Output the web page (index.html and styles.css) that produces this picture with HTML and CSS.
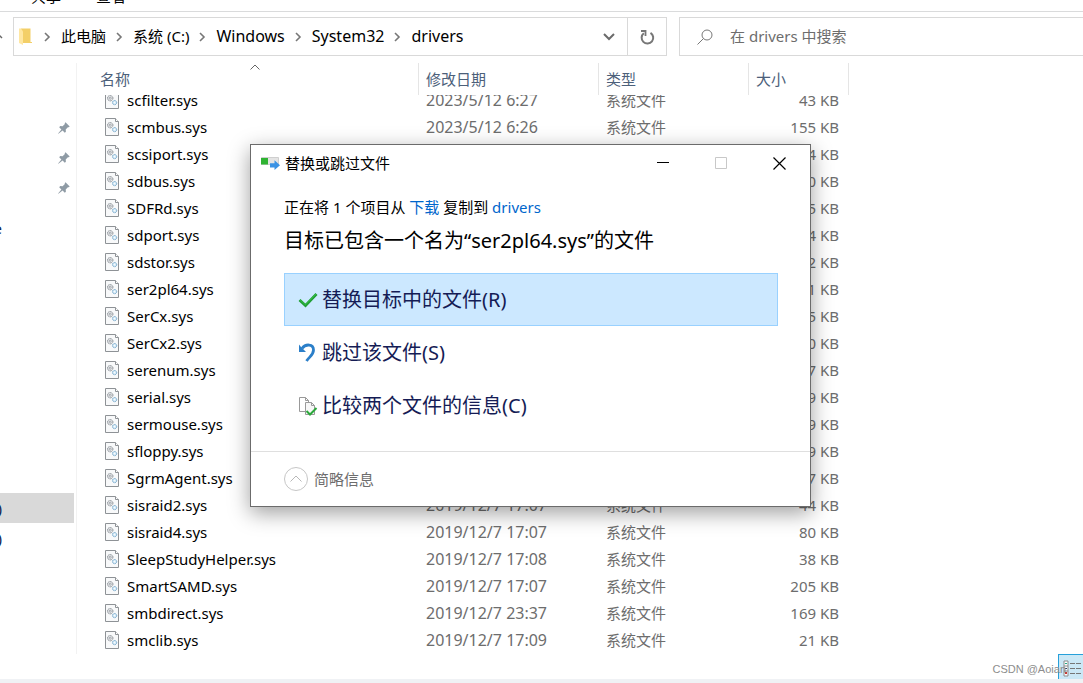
FILE: index.html
```html
<!DOCTYPE html>
<html lang="zh-CN">
<head>
<meta charset="utf-8">
<title>drivers</title>
<link rel="stylesheet" href="styles.css">
</head>
<body>
<svg class="defs" aria-hidden="true">
  <symbol id="sys" viewBox="0 0 14 18">
    <path d="M.5.5h10l3 3v14H.5z" fill="#f8f9fa" stroke="#8e9296"/>
    <path d="M10.500.5v3h3" fill="#fff" stroke="#8e9296"/>
    <circle cx="5.200" cy="7.200" r="2.700" fill="#e4e6e8" stroke="#838a90" stroke-dasharray="1.200 .5"/>
    <circle cx="5.200" cy="7.200" r="1" fill="#fff" stroke="#838a90" stroke-width=".7"/>
    <circle cx="9.600" cy="11.600" r="2.100" fill="#d8ecf8" stroke="#6fa3c8" stroke-dasharray="1.200 .4"/>
    <circle cx="9.600" cy="11.600" r=".6" fill="#fff"/>
  </symbol>
  <symbol id="chev" viewBox="0 0 8 10"><path d="M2 1l4 4-4 4" fill="none" stroke="#777" stroke-width="1.600"/></symbol>
  <symbol id="pin" viewBox="0 0 12 12"><path d="M7.500.3l4.200 4.200-1 .8-.8-.1-2.200 2.300.2 2.300-1.100 1L4.600 8.600.4 11.800l-.3-.3L3.400 7.400 1.200 5.200l1-1.100 2.400.2L6.900 2.100l-.2-.9z" fill="#8f9ba5"/></symbol>
</svg>

<nav class="menu">
  <a href="#">共享</a>
  <a href="#">查看</a>
</nav>

<header class="toolbar">
  <span class="up"><svg width="3" height="8" viewBox="0 0 3 8"><path d="M-2 1l4 4" fill="none" stroke="#666" stroke-width="1.500"/></svg></span>
  <div class="address">
    <svg class="folder" width="14" height="17" viewBox="0 0 14 17"><path d="M2 .5h9.500V14H13v1H2z" fill="#f3cf68"/><path d="M0 .5h2l2 3V17l-4-2z" fill="#ffe7a2"/></svg>
    <svg class="chev"><use href="#chev"/></svg><a href="#">此电脑</a>
    <svg class="chev"><use href="#chev"/></svg><a href="#">系统 (C:)</a>
    <svg class="chev"><use href="#chev"/></svg><a class="latin" href="#">Windows</a>
    <svg class="chev"><use href="#chev"/></svg><a class="latin" href="#">System32</a>
    <svg class="chev"><use href="#chev"/></svg><a class="latin" href="#">drivers</a>
    <button class="history" aria-label="历史记录"><svg width="12" height="8" viewBox="0 0 12 8"><path d="M1 1l5 5 5-5" fill="none" stroke="#6b6b6b" stroke-width="2"/></svg></button>
    <button class="refresh" aria-label="刷新"><svg width="16" height="16" viewBox="0 0 16 16"><path d="M4.800 4.200A5.800 5.800 0 1 0 11.500 3.800" fill="none" stroke="#777" stroke-width="2"/><path d="M2 2h4.500v5" fill="none" stroke="#777" stroke-width="1.800"/></svg></button>
  </div>
  <label class="search">
    <svg width="16" height="16" viewBox="0 0 16 16"><circle cx="10" cy="6" r="5" fill="none" stroke="#777"/><path d="M6.500 9.500L.5 15.500" stroke="#777"/></svg>
    <input type="search" placeholder="在 drivers 中搜索" aria-label="搜索">
  </label>
</header>

<main class="content">
  <aside class="tree">
    <div class="node pinned"><svg><use href="#pin"/></svg></div>
    <div class="node pinned"><svg><use href="#pin"/></svg></div>
    <div class="node pinned"><svg><use href="#pin"/></svg></div>
    <div class="node cloud"><span>e</span></div>
    <div class="node selected"><span>)</span></div>
    <div class="node"><span>)</span></div>
  </aside>

  <section class="list">
    <div class="columns">
      <button>名称<svg class="sort" width="10" height="6" viewBox="0 0 10 6"><path d="M.5 5.500L5 1l4.500 4.500" fill="none" stroke="#666"/></svg></button>
      <button>修改日期</button>
      <button>类型</button>
      <button>大小</button>
    </div>
    <div class="rows">
      <table>
        <tbody>
        <tr><th scope="row"><svg><use href="#sys"/></svg>scfilter.sys</th><td>2023/5/12 6:27</td><td>系统文件</td><td>43 KB</td></tr>
        <tr><th scope="row"><svg><use href="#sys"/></svg>scmbus.sys</th><td>2023/5/12 6:26</td><td>系统文件</td><td>155 KB</td></tr>
        <tr><th scope="row"><svg><use href="#sys"/></svg>scsiport.sys</th><td></td><td></td><td>4 KB</td></tr>
        <tr><th scope="row"><svg><use href="#sys"/></svg>sdbus.sys</th><td></td><td></td><td>0 KB</td></tr>
        <tr><th scope="row"><svg><use href="#sys"/></svg>SDFRd.sys</th><td></td><td></td><td>5 KB</td></tr>
        <tr><th scope="row"><svg><use href="#sys"/></svg>sdport.sys</th><td></td><td></td><td>4 KB</td></tr>
        <tr><th scope="row"><svg><use href="#sys"/></svg>sdstor.sys</th><td></td><td></td><td>2 KB</td></tr>
        <tr><th scope="row"><svg><use href="#sys"/></svg>ser2pl64.sys</th><td></td><td></td><td>1 KB</td></tr>
        <tr><th scope="row"><svg><use href="#sys"/></svg>SerCx.sys</th><td></td><td></td><td>5 KB</td></tr>
        <tr><th scope="row"><svg><use href="#sys"/></svg>SerCx2.sys</th><td></td><td></td><td>0 KB</td></tr>
        <tr><th scope="row"><svg><use href="#sys"/></svg>serenum.sys</th><td></td><td></td><td>7 KB</td></tr>
        <tr><th scope="row"><svg><use href="#sys"/></svg>serial.sys</th><td></td><td></td><td>9 KB</td></tr>
        <tr><th scope="row"><svg><use href="#sys"/></svg>sermouse.sys</th><td></td><td></td><td>9 KB</td></tr>
        <tr><th scope="row"><svg><use href="#sys"/></svg>sfloppy.sys</th><td></td><td></td><td>9 KB</td></tr>
        <tr><th scope="row"><svg><use href="#sys"/></svg>SgrmAgent.sys</th><td></td><td></td><td>7 KB</td></tr>
        <tr><th scope="row"><svg><use href="#sys"/></svg>sisraid2.sys</th><td>2019/12/7 17:07</td><td>系统文件</td><td>44 KB</td></tr>
        <tr><th scope="row"><svg><use href="#sys"/></svg>sisraid4.sys</th><td>2019/12/7 17:07</td><td>系统文件</td><td>80 KB</td></tr>
        <tr><th scope="row"><svg><use href="#sys"/></svg>SleepStudyHelper.sys</th><td>2019/12/7 17:08</td><td>系统文件</td><td>38 KB</td></tr>
        <tr><th scope="row"><svg><use href="#sys"/></svg>SmartSAMD.sys</th><td>2019/12/7 17:07</td><td>系统文件</td><td>205 KB</td></tr>
        <tr><th scope="row"><svg><use href="#sys"/></svg>smbdirect.sys</th><td>2019/12/7 23:37</td><td>系统文件</td><td>169 KB</td></tr>
        <tr><th scope="row"><svg><use href="#sys"/></svg>smclib.sys</th><td>2019/12/7 17:09</td><td>系统文件</td><td>21 KB</td></tr>
        </tbody>
      </table>
    </div>
  </section>
</main>

<footer class="status">
  <button class="view" aria-label="详细信息"><svg width="20" height="17" viewBox="0 0 20 17"><path d="M1 1h4v15H1z" fill="#fff" stroke="#8b8b8b"/><path d="M1 6h4M1 11h4" stroke="#8b8b8b"/><path d="M2 3h2v1H2z" fill="#2a8"/><path d="M2 8h2v1H2z" fill="#246"/><path d="M2 12h2v2H2z" fill="#c33"/><path d="M7 3.500h5m1 0h5M7 8.500h5m1 0h5M7 13.500h5m1 0h5" stroke="#777"/></svg></button>
  <span class="watermark">CSDN @Aoian</span>
</footer>

<div class="dialog" role="dialog" aria-labelledby="dialog-title">
  <div class="titlebar">
    <svg width="19" height="14" viewBox="0 0 19 14"><path d="M.5 1.500h17v7H.5z" fill="#e4e4e4" stroke="#cfcfcf"/><path d="M0 2h7v6.500H0z" fill="#2fb332"/><path d="M9 7.200h4.500V4.200L19 9.200l-5.500 4.800v-2.500H9z" fill="#3a92e4"/></svg>
    <span id="dialog-title">替换或跳过文件</span>
    <button aria-label="最小化"><svg width="12" height="12"><path d="M0 5.500h12" stroke="#000"/></svg></button>
    <button aria-label="最大化" disabled><svg width="12" height="12"><path d="M.5.5h11v11H.5z" fill="none" stroke="#c8c8c8"/></svg></button>
    <button aria-label="关闭"><svg width="13" height="13"><path d="M.5.5l12 12m0-12l-12 12" stroke="#000" stroke-width="1.200"/></svg></button>
  </div>
  <div class="body">
    <p class="source">正在将 1 个项目从 <a href="#">下载</a> 复制到 <a href="#">drivers</a></p>
    <h1>目标已包含一个名为“ser2pl64.sys”的文件</h1>
    <button class="option active"><svg width="20" height="20" viewBox="0 0 20 20"><path d="M1.500 10l6 5.500L18.500 4" fill="none" stroke="#1f9e35" stroke-width="2.800"/><path d="M2 9.800l5.500 5L18 4" fill="none" stroke="#35c043" stroke-width="1"/></svg>替换目标中的文件(R)</button>
    <button class="option"><svg width="20" height="20" viewBox="0 0 20 20"><path d="M4 5.500C7.500.5 15.500.8 15.500 7c0 5-4 6.500-7 11" fill="none" stroke="#2b7fc9" stroke-width="2.800"/><path d="M1 1.500v7.500h7L5.800 6.800 3 4z" fill="#2b7fc9"/></svg>跳过该文件(S)</button>
    <button class="option"><svg width="20" height="20" viewBox="0 0 20 20"><path d="M1.500 1.500h6l3 3v11h-9z" fill="#fff" stroke="#999"/><path d="M7.500 1.500v3h3" fill="none" stroke="#999"/><path d="M7.500 6.500h6l3 3v9h-9z" fill="#f7f7f7" stroke="#999"/><path d="M13.500 6.500v3h3" fill="none" stroke="#999"/><path d="M8.500 15l3.500 3.500L18.500 12" fill="none" stroke="#2aa83a" stroke-width="2"/></svg>比较两个文件的信息(C)</button>
  </div>
  <div class="details">
    <button><svg width="24" height="24" viewBox="0 0 24 24"><circle cx="12" cy="12" r="11.500" fill="#fff" stroke="#c6c6c6"/><path d="M6.500 14.500L12 9l5.500 5.500" fill="none" stroke="#b8b8b8"/></svg>简略信息</button>
  </div>
</div>
</body>
</html>
```
FILE: styles.css
```css
* { box-sizing: border-box; }

body {
  margin: 0;
  height: 100vh;
  display: flex;
  flex-direction: column;
  overflow: hidden;
  background: #fff;
  color: #000;
  font: 15px/20px "Noto Sans", "Noto Sans CJK SC", sans-serif;
}

button, input { font: inherit; color: inherit; border: 0; padding: 0; background: none; }
a { color: inherit; text-decoration: none; }
svg { flex: none; display: block; }
.defs { position: absolute; width: 0; height: 0; }

.menu {
  flex: none;
  height: 12px;
  padding-left: 31px;
  display: flex;
  align-items: flex-end;
  gap: 35px;
  overflow: hidden;
  border-bottom: 1px solid #dadbdc;
}
.menu a { padding-bottom: 5px; }

.toolbar { flex: none; height: 51px; padding: 5px 0 7px; display: flex; }
.up { width: 13px; display: flex; align-items: center; }
.address {
  width: 654px;
  border: 1px solid #d9d9d9;
  padding-left: 5px;
  display: flex;
  align-items: center;
}
.folder { margin-right: 1px; }
.chev { width: 8px; height: 10px; margin: 0 10px 0 9px; }
.address a { padding-bottom: 2px; }
.latin { font-size: 16px; }
.history { margin-left: auto; width: 36px; display: grid; place-items: center; }
.refresh {
  width: 39px;
  align-self: stretch;
  border-left: 1px solid #d9d9d9;
  display: grid;
  place-items: center;
}
.search {
  flex: 1;
  margin-left: 12px;
  border: 1px solid #d9d9d9;
  border-right: 0;
  padding-left: 17px;
  display: flex;
  align-items: center;
  gap: 17px;
}
.search input { flex: 1; min-width: 0; padding-bottom: 2px; outline: 0; }
.search input::placeholder { color: #6d6d6d; opacity: 1; }

.content { flex: 1; min-height: 0; display: flex; }
.tree {
  flex: none;
  width: 77px;
  padding: 50px 2px 0 0;
  border-right: 1px solid #f2f2f2;
}
.node { height: 30px; display: flex; align-items: center; overflow: hidden; color: #0a2350; }
.node span { display: flex; justify-content: flex-end; width: 2px; }
.pinned { justify-content: flex-end; padding-right: 4px; }
.pinned svg { width: 12px; height: 12px; }
.cloud { margin: 10px 0 250px; }
.selected { background: #d9d9d9; }

.list { flex: 1; min-width: 0; display: flex; flex-direction: column; }
.columns { flex: none; height: 32px; display: grid; grid-template-columns: 342px 180px 150px 100px; }
.columns button {
  position: relative;
  border-right: 1px solid #e5e5e5;
  padding: 0 7px;
  text-align: left;
  color: #4c607a;
}
.columns button:first-child { padding-left: 23px; }
.sort { position: absolute; left: 173px; top: 1px; }
.rows { flex: 1; min-height: 0; overflow: hidden; }
table { margin-top: -9px; width: 772px; table-layout: fixed; border-collapse: collapse; }
td, th { height: 27px; padding: 0 7px; text-align: left; font-weight: 400; color: #6d6d6d; white-space: nowrap; }
th { width: 342px; padding-left: 28px; color: #000; }
th svg { display: inline-block; width: 14px; height: 18px; margin-right: 8px; vertical-align: -3px; }
td:nth-child(2) { width: 180px; font-size: 16px; }
td:nth-child(3) { width: 150px; }
td:nth-child(4) { width: 100px; padding-right: 10px; text-align: right; }

.status {
  flex: none;
  height: 29px;
  position: relative;
  display: flex;
  justify-content: flex-end;
  border-bottom: 4px solid #f0f2f5;
}
.view { width: 25px; background: #cbe8f6; border: 1px solid #26a0da; border-width: 1px 0 0 1px; padding: 3px 0 0 4px; overflow: hidden; }
.watermark {
  position: absolute;
  right: 17px;
  bottom: 0;
  font: 11px/20px "Liberation Sans", sans-serif;
  color: #8d8d8d;
}

.dialog {
  position: absolute;
  left: 250px;
  top: 144px;
  width: 561px;
  background: #fff;
  border: 1px solid #6b6b6b;
  box-shadow: 0 6px 20px rgba(0, 0, 0, .38);
}
.titlebar { height: 36px; padding: 0 2px 0 10px; display: flex; align-items: center; }
.titlebar span { flex: 1; margin-left: 5px; }
.titlebar button { width: 58px; height: 36px; display: grid; place-items: center; }
.body { padding: 15px 32px 19px 33px; }
.source { margin: 0; line-height: 22px; }
.source a { color: #0066cc; }
h1 { margin: 8px 0 17px; font-size: 20px; line-height: 30px; font-weight: 400; }
.option {
  width: 100%;
  height: 53px;
  padding-left: 13px;
  display: flex;
  align-items: center;
  gap: 4px;
  border: 1px solid transparent;
  font-size: 20px;
  color: #151c55;
}
.active { background: #cce8ff; border-color: #99d1ff; }
.details { height: 55px; padding-left: 33px; display: flex; align-items: center; border-top: 1px solid #dfdfdf; }
.details button { display: flex; align-items: center; gap: 6px; color: #6d6d6d; }
```
